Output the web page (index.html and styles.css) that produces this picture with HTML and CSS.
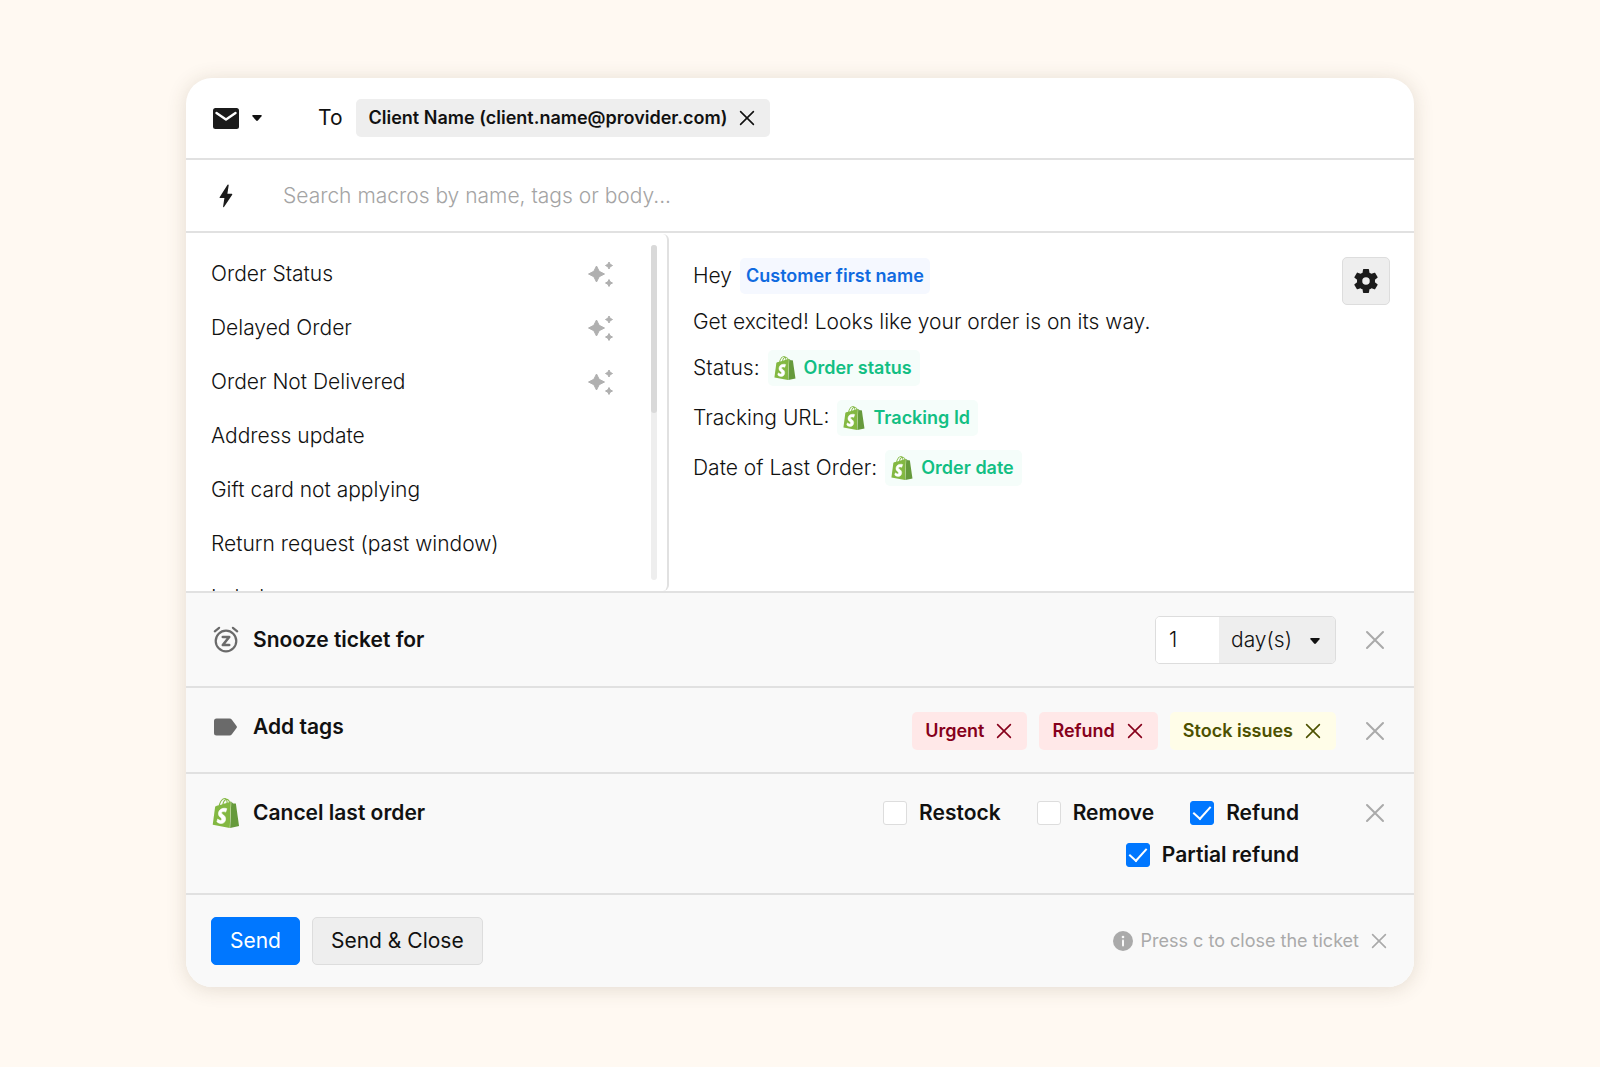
FILE: index.html
```html
<!DOCTYPE html>
<html lang="en">
<head>
    <meta charset="UTF-8">
    <meta name="viewport" content="width=device-width, initial-scale=1.0">
    <title>Reply with a macro</title>
    <link rel="stylesheet" href="styles.css">
</head>
<body>
    <svg class="sprite" aria-hidden="true">
        <symbol id="shopify" viewBox="1 0 22 24">
            <path fill="#669a3c" d="M15.337 23.979l7.216-1.561s-2.604-17.613-2.625-17.73c-.018-.116-.114-.192-.211-.192s-1.929-.136-1.929-.136-1.275-1.274-1.439-1.411c-.045-.037-.075-.057-.121-.074l-.914 21.104h.023z"/>
            <path fill="#83b842" d="M11.17.83c.136 0 .271.038.405.135-.984.465-2.064 1.639-2.508 3.992-.656.213-1.293.405-1.889.578C7.697 3.75 8.951.84 11.17.84V.83zm1.235 2.949v.135c-.754.232-1.583.484-2.394.736.466-1.777 1.333-2.645 2.085-2.971.193.501.309 1.176.309 2.1zm.539-2.234c.694.074 1.141.867 1.429 1.755-.349.114-.735.231-1.158.366v-.252c0-.752-.096-1.371-.271-1.871v.002zm2.992 1.289c-.02 0-.06.021-.078.021s-.289.075-.714.21c-.423-1.233-1.176-2.37-2.508-2.37h-.115C12.135.209 11.669 0 11.265 0 8.159 0 6.675 3.877 6.21 5.846c-1.194.365-2.063.636-2.16.674-.675.213-.694.232-.772.87-.075.462-1.83 14.063-1.83 14.063L15.009 24l.927-21.166z"/>
            <path fill="#fff" stroke="#fff" stroke-width=".5" d="M11.71 11.305s-.81-.424-1.774-.424c-1.447 0-1.504.906-1.504 1.141 0 1.232 3.24 1.715 3.24 4.629 0 2.295-1.44 3.76-3.406 3.76-2.354 0-3.54-1.465-3.54-1.465l.646-2.086s1.245 1.066 2.28 1.066c.675 0 .975-.545.975-.932 0-1.619-2.654-1.694-2.654-4.359-.034-2.237 1.571-4.416 4.827-4.416 1.257 0 1.875.361 1.875.361l-.945 2.715z"/>
        </symbol>
        <symbol id="close" viewBox="0 0 20 20">
            <path d="M2 2l16 16M18 2L2 18" fill="none" stroke="currentColor" stroke-width="2" stroke-linecap="round"/>
        </symbol>
        <symbol id="caret" viewBox="0 0 10 6">
            <path d="M1 0h8q1.400 0 .5 1.300L5.900 5.500q-.9.900-1.800 0L.5 1.300Q-.4 0 1 0z" fill="currentColor"/>
        </symbol>
        <symbol id="sparkles" viewBox="0 0 26 26">
            <g fill="currentColor" stroke="currentColor" stroke-linejoin="round">
                <path d="M8.500 5l2.700 5.300 5.300 2.700-5.300 2.700-2.700 5.300-2.700-5.300L.5 13l5.300-2.700z"/>
                <path d="M21 1l1.200 2.300L24.500 4.500l-2.300 1.200L21 8l-1.200-2.300-2.300-1.200 2.300-1.200zM21 18.500l1.200 2.300 2.300 1.200-2.300 1.200-1.200 2.300-1.200-2.300-2.300-1.200 2.300-1.200z"/>
            </g>
        </symbol>
    </svg>

    <main class="card">
        <header class="row to-row">
            <button class="icon-button channel" aria-label="Channel">
                <svg width="26" height="21" viewBox="0 0 26 21"><rect width="26" height="21" rx="2.500" fill="#1b1b1b"/><path d="M3.500 5l9.500 6.500L22.500 5" fill="none" stroke="#fff" stroke-width="2.400" stroke-linecap="round" stroke-linejoin="round"/></svg>
                <svg width="10" height="6"><use href="#caret"/></svg>
            </button>
            <span class="to-label">To</span>
            <span class="chip">Client Name (client.name@provider.com)
                <button class="icon-button" aria-label="Remove recipient"><svg width="16" height="16"><use href="#close"/></svg></button>
            </span>
        </header>

        <div class="row search-row">
            <svg width="26" height="24" viewBox="0 0 26 24"><path d="M14.500.8L6.600 13.200q-.4.800.5.800h4.300l-1.300 8.600q0 1.200.9.300l8.200-12.200q.4-.9-.5-.9h-4.300l1.300-8.500q-.1-1.300-1.200-.5z" fill="#1b1b1b"/></svg>
            <input class="search" type="text" aria-label="Search macros" placeholder="Search macros by name, tags or body...">
        </div>

        <section class="macros">
            <div class="macro-pane">
                <ul class="macro-list">
                    <li><a href="#">Order Status</a><svg width="26" height="26"><use href="#sparkles"/></svg></li>
                    <li><a href="#">Delayed Order</a><svg width="26" height="26"><use href="#sparkles"/></svg></li>
                    <li><a href="#">Order Not Delivered</a><svg width="26" height="26"><use href="#sparkles"/></svg></li>
                    <li><a href="#">Address update</a></li>
                    <li><a href="#">Gift card not applying</a></li>
                    <li><a href="#">Return request (past window)</a></li>
                    <li><a href="#">Label</a></li>
                </ul>
                <div class="scrollbar"><div class="thumb"></div></div>
            </div>
            <div class="preview">
                <div class="message">
                    <p>Hey <span class="variable customer">Customer first name</span></p>
                    <p>Get excited! Looks like your order is on its way.</p>
                    <p class="tall">Status: <span class="variable order"><svg width="22" height="24"><use href="#shopify"/></svg>Order status</span></p>
                    <p class="tall">Tracking URL: <span class="variable order"><svg width="22" height="24"><use href="#shopify"/></svg>Tracking Id</span></p>
                    <p class="tall">Date of Last Order: <span class="variable order"><svg width="22" height="24"><use href="#shopify"/></svg>Order date</span></p>
                </div>
                <button class="button settings" aria-label="Settings">
                    <svg width="30" height="30" viewBox="0 0 24 24"><path fill="#1b1b1b" d="M19.140 12.940c.04-.3.060-.61.060-.94 0-.32-.02-.64-.07-.94l2.030-1.580c.18-.14.230-.41.120-.61l-1.920-3.320c-.12-.22-.37-.29-.59-.22l-2.390.96c-.5-.38-1.030-.7-1.620-.94l-.36-2.540c-.04-.24-.24-.41-.48-.41h-3.840c-.24 0-.43.170-.47.410l-.36 2.540c-.59.240-1.130.570-1.620.940l-2.390-.96c-.22-.08-.47 0-.59.220L2.740 8.870c-.12.210-.08.470.12.610l2.030 1.580c-.05.300-.09.630-.09.940s.02.640.070.940l-2.030 1.580c-.18.140-.23.410-.12.610l1.920 3.320c.12.220.37.290.59.220l2.390-.96c.5.380 1.030.700 1.620.940l.36 2.540c.05.240.24.410.48.410h3.840c.24 0 .44-.17.470-.41l.36-2.540c.59-.24 1.130-.56 1.620-.94l2.390.96c.22.080.47 0 .59-.22l1.920-3.320c.12-.22.070-.47-.12-.61l-2.010-1.580zM12 15a3 3 0 1 1 0-6 3 3 0 0 1 0 6z"/></svg>
                </button>
            </div>
        </section>

        <section class="row action snooze">
            <h2>
                <svg width="28" height="28" viewBox="0 0 28 28" fill="none" stroke="#6a6a6a" stroke-width="2.200" stroke-linecap="round" stroke-linejoin="round"><circle cx="14" cy="15" r="10.300"/><path d="M2.800 5.300l4.300-3.500M25.200 5.300l-4.300-3.500"/><path d="M10.800 11h6.400l-6.400 8h6.400" stroke-width="2.600"/></svg>
                Snooze ticket for
            </h2>
            <div class="duration">
                <input type="text" value="1" aria-label="Snooze duration">
                <div class="unit">
                    <select aria-label="Snooze unit"><option>day(s)</option><option>hour(s)</option></select>
                    <svg class="unit-caret" width="10" height="6"><use href="#caret"/></svg>
                </div>
            </div>
            <button class="icon-button dismiss" aria-label="Remove snooze"><svg width="20" height="20"><use href="#close"/></svg></button>
        </section>

        <section class="row action tags">
            <h2>
                <svg width="28" height="20" viewBox="0 0 28 20"><path d="M4.500 1.500h13q1.500 0 2.400 1.200l4.800 6.500q.5.800 0 1.600l-4.800 6.500q-.9 1.200-2.400 1.200h-13q-2.500 0-2.500-2.500V4q0-2.500 2.500-2.500z" fill="#6a6a6a"/></svg>
                Add tags
            </h2>
            <div class="tag-list">
                <span class="chip red">Urgent <button class="icon-button" aria-label="Remove Urgent"><svg width="16" height="16"><use href="#close"/></svg></button></span>
                <span class="chip red">Refund <button class="icon-button" aria-label="Remove Refund"><svg width="16" height="16"><use href="#close"/></svg></button></span>
                <span class="chip yellow">Stock issues <button class="icon-button" aria-label="Remove Stock issues"><svg width="16" height="16"><use href="#close"/></svg></button></span>
            </div>
            <button class="icon-button dismiss" aria-label="Remove tags"><svg width="20" height="20"><use href="#close"/></svg></button>
        </section>

        <section class="row action cancel">
            <h2>
                <svg width="28" height="30"><use href="#shopify"/></svg>
                Cancel last order
            </h2>
            <div class="options">
                <label><input type="checkbox">Restock</label>
                <label><input type="checkbox">Remove</label>
                <label><input type="checkbox" checked>Refund</label>
                <label><input type="checkbox" checked>Partial refund</label>
            </div>
            <button class="icon-button dismiss" aria-label="Remove cancel order"><svg width="20" height="20"><use href="#close"/></svg></button>
        </section>

        <footer class="row footer">
            <button class="button primary">Send</button>
            <button class="button">Send &amp; Close</button>
            <p class="hint">
                <svg width="20" height="20" viewBox="0 0 20 20"><circle cx="10" cy="10" r="10" fill="#aaa"/><path d="M10 9.500v5" stroke="#f9f9f9" stroke-width="2" stroke-linecap="round"/><circle cx="10" cy="6" r="1.300" fill="#f9f9f9"/></svg>
                Press c to close the ticket
                <button class="icon-button" aria-label="Dismiss hint"><svg width="16" height="16"><use href="#close"/></svg></button>
            </p>
        </footer>
    </main>
</body>
</html>
```
FILE: styles.css
```css
* {
    box-sizing: border-box;
}
body {
    margin: 0;
    padding: 78px 24px;
    background-color: #fff9f2;
    color: #111;
    font-family: Inter, "Liberation Sans", sans-serif;
    font-size: 21px;
    font-weight: 300;
    line-height: 26px;
}
button, input, select {
    font: inherit;
    color: inherit;
}
svg {
    display: block;
    flex: none;
}
.sprite {
    position: absolute;
    width: 0;
    height: 0;
}
.card {
    max-width: 1228px;
    margin: 0 auto;
    background-color: #fff;
    border-radius: 26px;
    overflow: hidden;
    box-shadow: 0 2px 20px rgba(80, 60, 40, 0.16);
}
.row {
    display: flex;
    align-items: center;
    padding: 0 22px 0 25px;
    border-bottom: 2px solid #e1e1e1;
}
.icon-button {
    display: flex;
    align-items: center;
    padding: 0;
    border: none;
    background: none;
    cursor: pointer;
}

/* recipient and search */
.to-row {
    height: 82px;
    padding-left: 27px;
}
.channel {
    gap: 13px;
    margin-right: 56px;
}
.to-label {
    margin-right: 13px;
    font-weight: 400;
}
.chip {
    display: flex;
    align-items: center;
    gap: 12px;
    height: 38px;
    padding: 0 15px 0 13px;
    border-radius: 5px;
    background-color: #eee;
    font-size: 18px;
    font-weight: 600;
}
.search-row {
    height: 73px;
    padding-left: 27px;
}
.search {
    flex: 1;
    margin-left: 44px;
    padding: 0;
    border: none;
    outline: none;
    background: transparent;
}
.search::placeholder {
    color: #a4a4a4;
    opacity: 1;
}

/* macro list and preview */
.macros {
    display: flex;
    height: 360px;
    border-bottom: 2px solid #e1e1e1;
}
.macro-pane {
    display: flex;
    width: 483px;
    margin: 1px 0 0;
    padding-right: 10px;
    border-right: 2px solid #e1e1e1;
    border-radius: 0 6px 6px 0;
}
.macro-list {
    flex: 1;
    margin: 0;
    padding: 13px 37px 0 25px;
    list-style: none;
    overflow: hidden;
}
.macro-list li {
    display: flex;
    align-items: center;
    justify-content: space-between;
    height: 54px;
}
.macro-list a {
    color: inherit;
    text-decoration: none;
}
.macro-list svg {
    color: #b0b0b0;
}
.scrollbar {
    width: 6px;
    margin: 11px 0;
    border-radius: 3px;
    background-color: #eee;
}
.thumb {
    height: 50%;
    border-radius: 3px;
    background-color: #d9d9d9;
}
.preview {
    display: flex;
    flex: 1;
    justify-content: space-between;
    align-items: flex-start;
    padding: 24px 24px 0;
}
.message p {
    display: flex;
    align-items: center;
    height: 38px;
    margin: 0 0 8px;
}
.message .tall {
    margin-bottom: 12px;
}
.variable {
    display: inline-flex;
    align-items: center;
    gap: 8px;
    height: 36px;
    margin-left: 8px;
    padding: 0 6px;
    border-radius: 5px;
    font-size: 18px;
    font-weight: 600;
}
.customer {
    background-color: #f5f8ff;
    color: #0f6ae0;
}
.order {
    padding-right: 8px;
    background-color: #f5fdfa;
    color: #12bf83;
}
.button {
    height: 48px;
    padding: 0 18px;
    border: 1px solid #ddd;
    border-radius: 5px;
    background-color: #eee;
    font-weight: 400;
    cursor: pointer;
}
.primary {
    border-color: #0077ff;
    background-color: #0077ff;
    color: #fff;
}
.settings {
    width: 48px;
    padding: 0 8px;
}

/* actions */
.action {
    background-color: #f9f9f9;
}
.action h2 {
    display: flex;
    align-items: center;
    gap: 13px;
    margin: 0 auto 0 0;
    padding-left: 1px;
    font-size: 21px;
    font-weight: 600;
}
.dismiss {
    height: 24px;
    margin: 0 7px 0 29px;
    color: #aaa;
}
.snooze {
    height: 95px;
}
.duration {
    display: flex;
    height: 48px;
    border: 1px solid #ddd;
    border-radius: 5px;
    overflow: hidden;
}
.duration input {
    width: 63px;
    padding: 0 13px;
    border: none;
    background-color: #fff;
}
.unit {
    position: relative;
    display: flex;
}
.unit select {
    appearance: none;
    width: 116px;
    padding: 0 12px;
    border: none;
    background-color: #eee;
}
.unit-caret {
    position: absolute;
    right: 15px;
    top: 21px;
    pointer-events: none;
}
.tags {
    height: 86px;
    padding-top: 2px;
}
.tags h2 {
    padding-bottom: 8px;
}
.tag-list {
    display: flex;
    gap: 12px;
}
.red {
    background-color: #ffe8e8;
    color: #86001b;
}
.yellow {
    background-color: #fffde8;
    color: #4d5100;
}
.cancel {
    align-items: flex-start;
    padding-top: 24px;
    padding-bottom: 25px;
}
.cancel .dismiss {
    margin-top: 3px;
}
.options {
    display: flex;
    flex-wrap: wrap;
    justify-content: flex-end;
    gap: 16px 36px;
    width: 480px;
    padding-top: 2px;
    padding-right: 37px;
    font-weight: 600;
}
.options label {
    display: flex;
    align-items: center;
    gap: 12px;
}
.options input {
    display: grid;
    place-items: center;
    appearance: none;
    width: 24px;
    height: 24px;
    margin: 0;
    border: 1px solid #ddd;
    border-radius: 3px;
    background-color: #fff;
}
.options input:checked {
    border-color: #0077ff;
    background-color: #0077ff;
}
.options input:checked::before {
    content: "";
    width: 8px;
    height: 15px;
    margin-bottom: 5px;
    border: solid #fff;
    border-width: 0 2px 2px 0;
    transform: rotate(42deg);
}

/* footer */
.footer {
    gap: 12px;
    height: 92px;
    border-bottom: none;
    background-color: #f9f9f9;
}
.hint {
    display: flex;
    align-items: center;
    gap: 8px;
    margin: 0 5px 0 auto;
    color: #aaa;
    font-size: 18px;
    font-weight: 400;
}
.hint .icon-button {
    margin-left: 4px;
}
```
